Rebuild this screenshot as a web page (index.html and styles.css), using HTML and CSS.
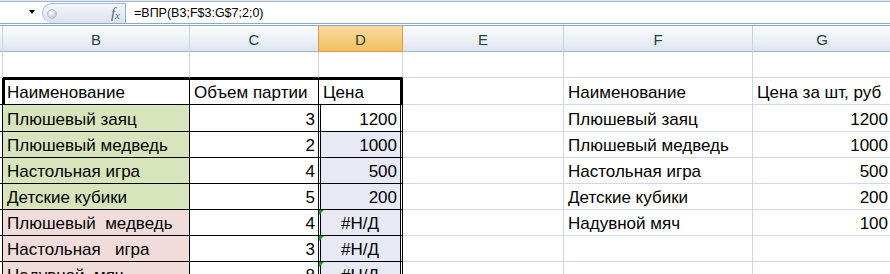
FILE: index.html
```html
<!DOCTYPE html>
<html lang="ru">
  <head>
    <meta charset="UTF-8" />
    <title>ВПР</title>
    <link rel="stylesheet" href="styles.css">
  </head>

  <body>
    <div class="formula-bar">
      <div class="name-box"><span class="arrow"></span></div>
      <div class="fx-box">
        <span class="knob"></span>
        <i class="fx">f<span>x</span></i>
      </div>
      <div class="formula">=ВПР(B3;F$3:G$7;2;0)</div>
    </div>

    <div class="sheet">
      <!-- заголовки столбцов -->
      <div class="hd"></div>
      <div class="hd">B</div>
      <div class="hd before-on">C</div>
      <div class="hd on">D</div>
      <div class="hd">E</div>
      <div class="hd">F</div>
      <div class="hd">G</div>

      <!-- строка 1 -->
      <div class="stub"></div>
      <div class="c top"></div>
      <div class="c top"></div>
      <div class="c top"></div>
      <div class="c"></div>
      <div class="c"></div>
      <div class="c"></div>

      <!-- строка 2 -->
      <div class="stub t"></div>
      <div class="c t thick-l">Наименование</div>
      <div class="c t thick-t">Объем партии</div>
      <div class="c t thick-r">Цена</div>
      <div class="c"></div>
      <div class="c">Наименование</div>
      <div class="c">Цена за шт, руб</div>

      <!-- строка 3 -->
      <div class="stub t"></div>
      <div class="c t green">Плюшевый заяц</div>
      <div class="c t num">3</div>
      <div class="c t num dcol">1200</div>
      <div class="c"></div>
      <div class="c">Плюшевый заяц</div>
      <div class="c num">1200</div>

      <!-- строка 4 -->
      <div class="stub t"></div>
      <div class="c t green">Плюшевый медведь</div>
      <div class="c t num">2</div>
      <div class="c t num dcol sel">1000</div>
      <div class="c"></div>
      <div class="c">Плюшевый медведь</div>
      <div class="c num">1000</div>

      <!-- строка 5 -->
      <div class="stub t"></div>
      <div class="c t green">Настольная игра</div>
      <div class="c t num">4</div>
      <div class="c t num dcol sel">500</div>
      <div class="c"></div>
      <div class="c">Настольная игра</div>
      <div class="c num">500</div>

      <!-- строка 6 -->
      <div class="stub t"></div>
      <div class="c t green">Детские кубики</div>
      <div class="c t num">5</div>
      <div class="c t num dcol sel">200</div>
      <div class="c"></div>
      <div class="c">Детские кубики</div>
      <div class="c num">200</div>

      <!-- строка 7 -->
      <div class="stub t"></div>
      <div class="c t pink">Плюшевый  медведь</div>
      <div class="c t num">4</div>
      <div class="c t err dcol sel flag">#Н/Д</div>
      <div class="c"></div>
      <div class="c">Надувной мяч</div>
      <div class="c num">100</div>

      <!-- строка 8 -->
      <div class="stub t"></div>
      <div class="c t pink">Настольная   игра</div>
      <div class="c t num">3</div>
      <div class="c t err dcol sel flag">#Н/Д</div>
      <div class="c"></div>
      <div class="c"></div>
      <div class="c"></div>

      <!-- строка 9 -->
      <div class="stub t"></div>
      <div class="c t pink">Надувной  мяч</div>
      <div class="c t num">8</div>
      <div class="c t err dcol sel flag">#Н/Д</div>
      <div class="c"></div>
      <div class="c"></div>
      <div class="c"></div>
    </div>
  </body>
</html>
```

FILE: styles.css
```css
* {
  margin: 0;
  padding: 0;
  box-sizing: border-box;
}

html,
body {
  width: 890px;
  height: 274px;
  overflow: hidden;
  background: #fff;
  font-family: "Liberation Sans", Arial, sans-serif;
}

/* строка формул */
.formula-bar {
  display: flex;
  height: 26px;
  border-top: 1px solid #dde6f1;
  border-bottom: 3px double #8fa8c6;
  box-shadow: inset 0 1px 0 #a3b6cd;
}

.name-box {
  width: 42px;
  display: flex;
  align-items: center;
  justify-content: flex-end;
  padding-right: 7px;
}

.arrow {
  width: 0;
  height: 0;
  border-left: 3.5px solid transparent;
  border-right: 3.5px solid transparent;
  border-top: 4px solid #000;
}

.fx-box {
  width: 84px;
  margin-top: 2px;
  display: flex;
  align-items: center;
  justify-content: space-between;
  padding: 0 5px 0 4px;
  border: 1px solid #a7b9cf;
  border-bottom: none;
  border-right-color: #98abc3;
  border-radius: 11px 0 0 11px;
  background: linear-gradient(#f4f7fb, #dbe3ee);
}

.knob {
  width: 10px;
  height: 10px;
  border-radius: 50%;
  border: 1px solid #b3bdc9;
  background: radial-gradient(circle at 40% 35%, #fff, #c0c9d4 75%);
}

.fx {
  font-family: "Liberation Serif", serif;
  font-size: 15px;
  color: #5b6676;
}

.fx span {
  font-size: 11px;
  vertical-align: -1px;
}

.formula {
  flex: 1;
  padding: 2px 0 0 8px;
  font-size: 12.5px;
  line-height: 20px;
  color: #000;
}

/* лист */
.sheet {
  display: grid;
  grid-template-columns: 3px 187px 129px 84px 161px 189px 139px;
  grid-template-rows: 26px 26px 27px 27px repeat(6, 26px);
  height: 248px;
  overflow: hidden;
}

.hd {
  display: flex;
  justify-content: center;
  align-items: flex-end;
  padding-bottom: 4px;
  font-size: 15px;
  line-height: 1;
  color: #27413e;
  border-right: 1px solid #c5d2e2;
  border-bottom: 1px solid #9eb6ce;
  background: linear-gradient(#f9fbfd 0%, #eef2f8 50%, #dde5ef 100%);
}

.hd.before-on {
  border-right-color: #f29536;
}

.hd.on {
  border-right-color: #f29536;
  border-bottom-color: #f29536;
  background: linear-gradient(#f9dba2, #f1c15f);
}

.stub {
  border-right: 1px solid #d0d7e5;
  border-bottom: 1px solid #d0d7e5;
}

.c {
  position: relative;
  display: flex;
  align-items: flex-end;
  padding: 0 4px 3px;
  font-size: 17px;
  line-height: 1;
  color: #000;
  white-space: pre;
  overflow: hidden;
  border-right: 1px solid #d0d7e5;
  border-bottom: 1px solid #d0d7e5;
}

.c.top {
  border-bottom-color: #000;
}

.t {
  border-right-color: #000;
  border-bottom-color: #000;
}

.num {
  justify-content: flex-end;
  padding-right: 3px;
}

.err {
  justify-content: center;
}

.green {
  background: #d8e4bc;
}

.pink {
  background: #f2dcdb;
}

.sel {
  background: #e7eaf4;
}

.dcol {
  padding-right: 5px;
  box-shadow: inset 1px 0 0 #fff, inset 2px 0 0 #000, inset -1px 0 0 #fff, inset -2px 0 0 #000;
}

.thick-l {
  box-shadow: inset 0 2px 0 #000, inset 2px 0 0 #000;
}

.thick-t {
  box-shadow: inset 0 2px 0 #000;
}

.thick-r {
  box-shadow: inset 0 2px 0 #000, inset -2px 0 0 #000;
}

.flag::before {
  content: "";
  position: absolute;
  top: 0;
  left: 0;
  border-top: 5px solid #1c9a34;
  border-right: 5px solid transparent;
}
```
